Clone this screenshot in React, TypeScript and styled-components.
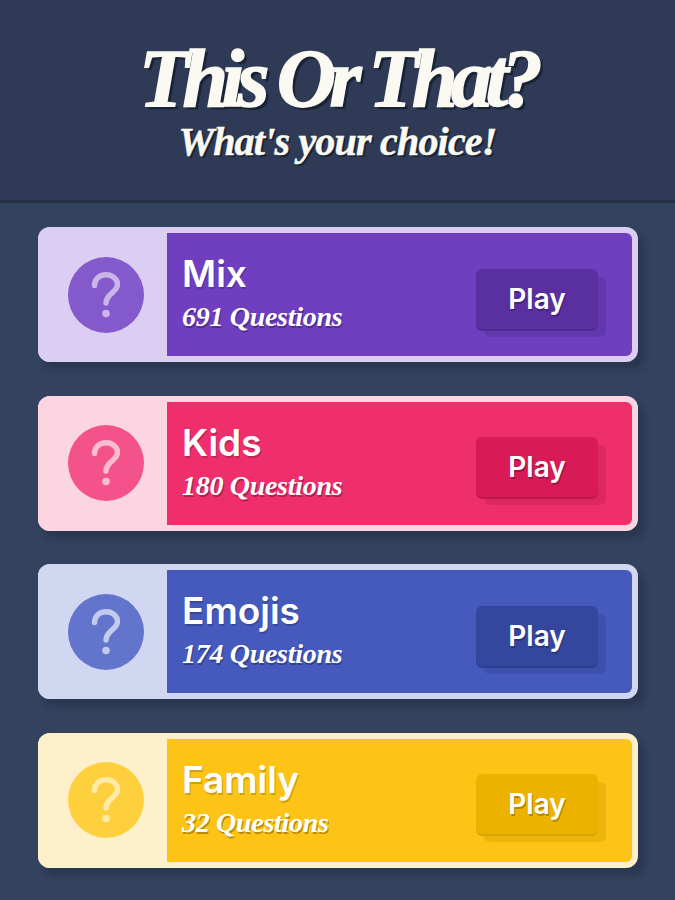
import React from "react";
import styled, { createGlobalStyle } from "styled-components";

const GlobalStyle = createGlobalStyle`
  html, body {
    margin: 0;
    padding: 0;
    background: #33425e;
  }
`;

const Page = styled.div`
  width: 675px;
  height: 900px;
  overflow: hidden;
  display: flex;
  flex-direction: column;
  background: #33425e;
`;

const Header = styled.header`
  height: 203px;
  box-sizing: border-box;
  padding-top: 38px;
  background: #2e3a56;
  border-bottom: 3px solid #263147;
  text-align: center;
  color: #fafaf3;
  font-family: "Liberation Serif", serif;
  font-style: italic;
  font-weight: 700;
`;

const Title = styled.h1`
  margin: 0;
  font-size: 82px;
  line-height: 82px;
  font-weight: 700;
  letter-spacing: -6.6px;
  -webkit-text-stroke: 1.5px #fafaf3;
  text-shadow: 3px 3px 0 #1a2235;
`;

const Subtitle = styled.h2`
  margin: 0;
  font-size: 40px;
  line-height: 44px;
  font-weight: 700;
  letter-spacing: -0.8px;
  -webkit-text-stroke: 0.5px #fafaf3;
  text-shadow: 2px 2px 0 #1a2235;
`;

const List = styled.main`
  display: flex;
  flex-direction: column;
  gap: 33.5px;
  padding: 24px 37px 0 38px;
`;

const Card = styled.section<{ $edge: string }>`
  height: 135px;
  box-sizing: border-box;
  display: flex;
  border: 6px solid ${(p) => p.$edge};
  border-left: 0;
  border-radius: 12px;
  background: ${(p) => p.$edge};
  box-shadow: 6px 7px 6px rgba(30, 40, 60, 0.45);
`;

const Side = styled.div<{ $tint: string }>`
  width: 129px;
  box-sizing: border-box;
  padding-left: 30px;
  display: flex;
  align-items: center;
  background: ${(p) => p.$tint};
  border-radius: 12px 0 0 12px;
  margin: -6px 0;
`;

const Circle = styled.div<{ $color: string; $mark: string }>`
  width: 76px;
  height: 76px;
  border-radius: 50%;
  display: flex;
  align-items: center;
  justify-content: center;
  background: ${(p) => p.$color};
  color: ${(p) => p.$mark};
`;

const Body = styled.div<{ $color: string }>`
  flex: 1;
  display: flex;
  align-items: center;
  justify-content: space-between;
  padding: 0 34px 0 15px;
  background: ${(p) => p.$color};
  border-radius: 0 6px 6px 0;
  color: #fff;
`;

const Name = styled.div`
  font-family: "Inter", sans-serif;
  font-weight: 600;
  font-size: 37px;
  line-height: 40px;
  text-shadow: 1px 2px 0 rgba(0, 0, 0, 0.2);
`;

const Count = styled.div`
  font-family: "Liberation Serif", serif;
  font-style: italic;
  font-weight: 700;
  font-size: 28px;
  line-height: 36px;
  letter-spacing: -0.3px;
  margin-top: 5px;
  text-shadow: 1px 2px 0 rgba(0, 0, 0, 0.3);
`;

const PlayButton = styled.div<{ $color: string; $shadow: string; $edge: string }>`
  width: 122px;
  height: 60px;
  margin-top: 8px;
  display: flex;
  align-items: center;
  justify-content: center;
  border-radius: 6px;
  background: ${(p) => p.$color};
  box-shadow: 0 2px 0 ${(p) => p.$edge}, 8px 8px 0 ${(p) => p.$shadow};
  font-family: "Inter", sans-serif;
  font-weight: 600;
  font-size: 28px;
  text-shadow: 1px 2px 0 rgba(0, 0, 0, 0.25);
`;

const categories = [
  { name: "Mix", count: "691 Questions", main: "#6f3fbf", edge: "#dccdf2", tint: "#dccdf2", circle: "#8359cb", mark: "#c9b5ea", btn: "#5a30a0", btnEdge: "#4f2a90", shadow: "#6337ae" },
  { name: "Kids", count: "180 Questions", main: "#ee2f6b", edge: "#fbd5e1", tint: "#fbd5e1", circle: "#f3528a", mark: "#fbbcd0", btn: "#d81b56", btnEdge: "#c2174c", shadow: "#db2860" },
  { name: "Emojis", count: "174 Questions", main: "#4659bd", edge: "#d1d7f0", tint: "#d1d7f0", circle: "#6274cb", mark: "#c2cbec", btn: "#35469f", btnEdge: "#2f3e8f", shadow: "#3e50ad" },
  { name: "Family", count: "32 Questions", main: "#fdc417", edge: "#fff0cc", tint: "#fff0cc", circle: "#fed03e", mark: "#ffeaa6", btn: "#edb200", btnEdge: "#dba400", shadow: "#ecb50c" },
];

const QuestionMark = () => (
  <svg width="30" height="46" viewBox="0 0 30 46" fill="none" stroke="currentColor" strokeWidth="5.4" strokeLinecap="round">
    <path d="M3.5 13.5 C3.5 7 8.5 2.8 15 2.8 C21.5 2.8 26.5 7 26.5 12.5 C26.5 20.5 15 21.5 15 31" />
    <circle cx="15" cy="41.5" r="3.8" fill="currentColor" stroke="none" />
  </svg>
);

export default function App() {
  return (
    <Page>
      <GlobalStyle />
      <Header>
        <Title>This Or That?</Title>
        <Subtitle>What's your choice!</Subtitle>
      </Header>
      <List>
        {categories.map((c) => (
          <Card key={c.name} $edge={c.edge}>
            <Side $tint={c.tint}>
              <Circle $color={c.circle} $mark={c.mark}>
                <QuestionMark />
              </Circle>
            </Side>
            <Body $color={c.main}>
              <div>
                <Name>{c.name}</Name>
                <Count>{c.count}</Count>
              </div>
              <PlayButton $color={c.btn} $edge={c.btnEdge} $shadow={c.shadow}>Play</PlayButton>
            </Body>
          </Card>
        ))}
      </List>
    </Page>
  );
}
